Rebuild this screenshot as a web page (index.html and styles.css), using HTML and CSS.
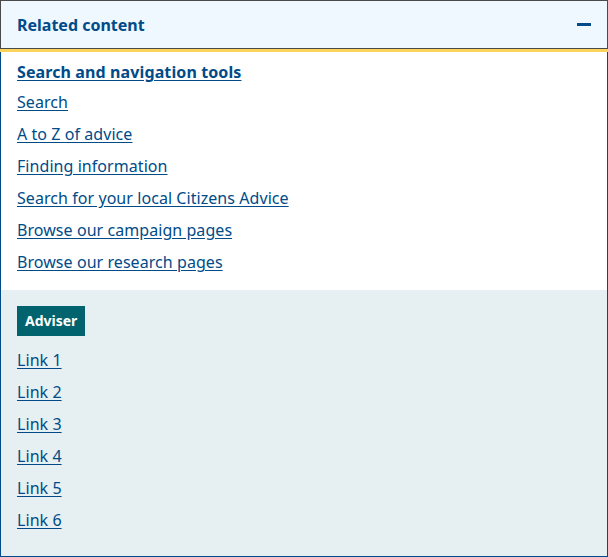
FILE: index.html
```html
<!DOCTYPE html>
<html lang="en">
<head>
<meta charset="utf-8">
<title>Related content</title>
<link rel="stylesheet" href="styles.css">
</head>
<body>
<section class="panel">
  <button class="panel-header" type="button">
    <span class="panel-title">Related content</span>
    <span class="minus" aria-hidden="true"></span>
  </button>
  <div class="panel-body">
    <div class="group group-public">
      <h2 class="group-title"><a href="#">Search and navigation tools</a></h2>
      <ul class="links">
        <li><a href="#">Search</a></li>
        <li><a href="#">A to Z of advice</a></li>
        <li><a href="#">Finding information</a></li>
        <li><a href="#">Search for your local Citizens Advice</a></li>
        <li><a href="#">Browse our campaign pages</a></li>
        <li><a href="#">Browse our research pages</a></li>
      </ul>
    </div>
    <div class="group group-adviser">
      <span class="badge">Adviser</span>
      <ul class="links">
        <li><a href="#">Link 1</a></li>
        <li><a href="#">Link 2</a></li>
        <li><a href="#">Link 3</a></li>
        <li><a href="#">Link 4</a></li>
        <li><a href="#">Link 5</a></li>
        <li><a href="#">Link 6</a></li>
      </ul>
    </div>
  </div>
</section>
</body>
</html>
```
FILE: styles.css
```css
* { box-sizing: border-box; }
html, body { margin: 0; padding: 0; background: #fff; }
body { font-family: "Noto Sans", "Open Sans", sans-serif; font-size: 16px; color: #004b88; }
.panel { width: 608px; height: 557px; display: flex; flex-direction: column; }
.panel-header {
  display: flex; align-items: center; justify-content: space-between;
  height: 49px; padding: 0 16px; margin: 0;
  background: #eff7ff; border: 1px solid #4a4a4a;
  box-shadow: 0 3px 0 #fcd45c;
  font: inherit; color: #004b88; text-align: left; cursor: pointer;
  position: relative; z-index: 1;
}
.panel-title { font-weight: 700; font-size: 16px; line-height: 24px; }
.minus { width: 14px; height: 3px; background: #004b88; margin-right: 0; }
.panel-body {
  flex: 1; display: flex; flex-direction: column;
  border: 1px solid #004b88; border-top: 0; margin-top: 3px;
}
.group { padding: 8px 16px 16px; }
.group-adviser { flex: 1; background: #e6eff1; padding: 16px 16px 24px; }
.group-title { margin: 0 0 6px; font-size: 16px; line-height: 24px; font-weight: 700; letter-spacing: 0.11px; }
.links { list-style: none; margin: 0; padding: 0; display: flex; flex-direction: column; gap: 8px; }
.links li { line-height: 24px; letter-spacing: 0.06px; }
a { color: #004b88; text-decoration: underline; text-underline-offset: 2px; }
.badge {
  display: inline-block; background: #00636e; color: #fff; font-weight: 700;
  font-size: 14px; line-height: 30px; height: 30px; padding: 0 8px; margin-bottom: 12px;
}
```
